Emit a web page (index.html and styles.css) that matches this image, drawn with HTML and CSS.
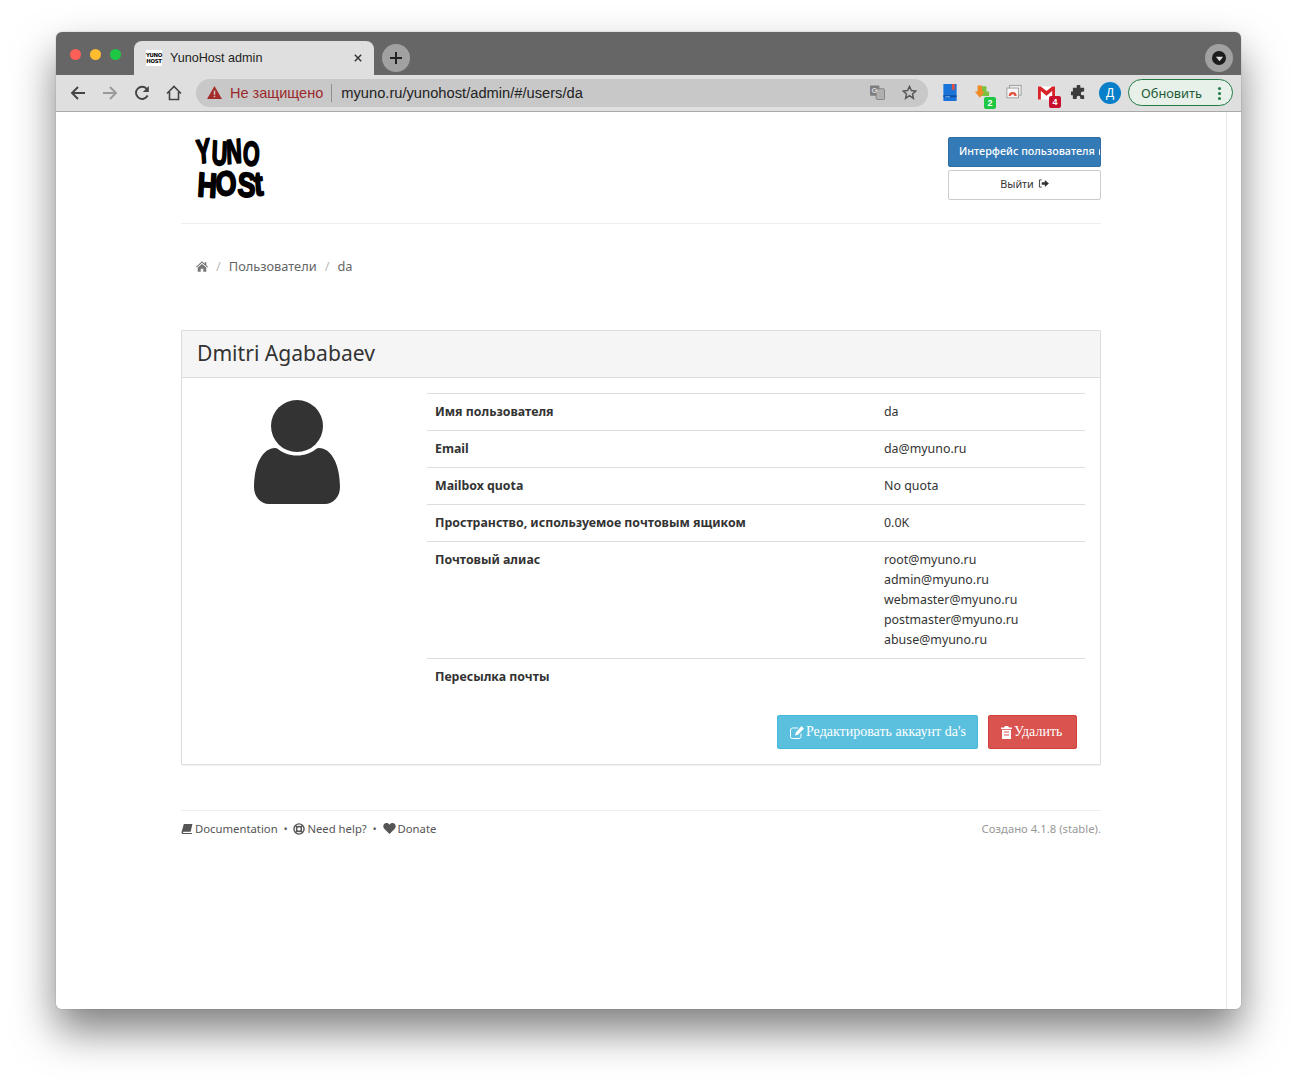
FILE: index.html
```html
<!DOCTYPE html>
<html lang="ru">
<head>
<meta charset="utf-8">
<title>YunoHost admin</title>
<link rel="stylesheet" href="styles.css">
</head>
<body>
<div class="window">
  <div class="titlebar">
    <div class="lights"><i class="light red"></i><i class="light yellow"></i><i class="light green"></i></div>
    <div class="tab">
      <span class="favicon"><span>Yuno</span><span>Host</span></span>
      <span class="tab-title">YunoHost admin</span>
      <svg class="tab-close" viewBox="0 0 10 10"><path d="M1 1l8 8M9 1l-8 8"/></svg>
    </div>
    <div class="newtab"><svg viewBox="0 0 12 12"><path d="M6 0v12M0 6h12"/></svg></div>
    <div class="spacer"></div>
    <div class="profile-menu"><span class="dark-disc"><svg viewBox="0 0 10 10"><path d="M1 3h8L5 8z"/></svg></span></div>
  </div>
  <div class="toolbar">
    <svg class="nav" viewBox="0 0 16 16"><path class="st" d="M15 8H2M8 2L2 8l6 6"/></svg>
    <svg class="nav fwd" viewBox="0 0 16 16"><path class="st" d="M1 8h13M8 2l6 6-6 6"/></svg>
    <svg class="nav" viewBox="0 0 16 16"><path class="st" d="M13.6 10.500A6.100 6.100 0 1 1 13 4.200"/><path class="fl" d="M14.800 1v6h-6z"/></svg>
    <svg class="nav" viewBox="0 0 16 16"><path class="st thin" d="M1 8.500L8 1.500l7 7M3.500 7v7.500h9V7"/></svg>
    <div class="omnibox">
      <svg class="warn" viewBox="0 0 16 14"><path d="M8 0l8 14H0z"/><rect class="wm" x="7.200" y="5" width="1.600" height="4.500"/><rect class="wm" x="7.200" y="10.500" width="1.600" height="1.600"/></svg>
      <span class="insecure">Не защищено</span>
      <span class="omni-sep"></span>
      <span class="url">myuno.ru/yunohost/admin/#/users/da</span>
      <span class="spacer"></span>
      <svg class="translate" viewBox="0 0 16 16"><rect class="tr1" x="0" y="0.500" width="10" height="11" rx="1"/><rect class="tr2" x="6.500" y="4" width="9" height="11.500" rx="1"/><text class="trg" x="1.500" y="9">G</text></svg>
      <svg class="star" viewBox="0 0 16 16"><path d="M8 1.500l2 4.400 4.800.5-3.600 3.200 1 4.700L8 11.400l-4.200 2.900 1-4.700L1.200 6.400 6 5.900z"/></svg>
    </div>
    <div class="extensions">
      <svg class="ext" viewBox="0 0 16 18"><path fill="#1a73d9" d="M1 0h14v18H1z"/><path fill="#0d4fa3" d="M1 12h14v2H1z"/><path fill="#e2503f" d="M10 0h3v7l-1.500-1.500L10 7z"/><path fill="#7cb8f0" d="M3 13h5v1H3z"/></svg>
      <span class="ext-wrap">
        <svg class="ext" viewBox="0 0 18 18"><path fill="#7cc242" d="M8 2h6v6h3v5H8z"/><path fill="#f08a24" d="M4 1h5v7h3l-5.500 7L1 8h3z"/></svg>
        <b class="badge green-badge">2</b>
      </span>
      <svg class="ext" viewBox="0 0 18 18"><rect x="4" y="1" width="13" height="11" fill="#ececec" stroke="#999"/><rect x="1" y="4" width="13" height="11" fill="#f6f6f6" stroke="#999"/><path fill="#e2503f" d="M3 13a4.500 4.500 0 0 1 9 0H9.500a2 2 0 0 0-4 0z"/></svg>
      <span class="ext-wrap">
        <svg class="ext gmail" viewBox="0 0 18 14"><path fill="#fff" d="M0 0h18v14H0z"/><path fill="#d8232a" d="M0 0h3l6 5 6-5h3v14h-3V5l-6 5-6-5v9H0z"/></svg>
        <b class="badge red-badge">4</b>
      </span>
      <svg class="ext puzzle" viewBox="0 0 16 16"><path d="M6 1.500a2 2 0 0 1 4 0V3h4v4h-1.500a2 2 0 0 0 0 4H14v4h-4v-1.500a2 2 0 0 0-4 0V15H2v-4H.5a2 2 0 0 1 0-4H2V3h4z"/></svg>
      <span class="avatar-chip">Д</span>
    </div>
    <div class="update">
      <span>Обновить</span>
      <span class="dots"><i></i><i></i><i></i></span>
    </div>
  </div>
  <div class="viewport">
    <div class="page">
      <div class="container">
        <header class="site-header">
          <svg class="logo" viewBox="0 0 72 62">
            <text x="2" y="27" rotate="-6 4 -4 6" textLength="62" lengthAdjust="spacingAndGlyphs">YUNO</text>
            <text x="2" y="59" rotate="4 -4 3 -6" textLength="67" lengthAdjust="spacingAndGlyphs">HOSt</text>
          </svg>
          <div class="header-actions">
            <a class="hbtn primary"><span>Интерфейс пользователя</span><span class="clip-icon"></span></a>
            <a class="hbtn plain"><span>Выйти</span>
              <svg class="ico-logout" viewBox="0 0 12 10"><path class="st1" d="M4 1H1.500v8H4"/><path d="M4 3.500h3.500V1L12 5 7.500 9V6.500H4z"/></svg>
            </a>
          </div>
        </header>
        <nav class="crumbs">
          <svg class="ico-home" viewBox="0 0 14 12"><path d="M7 0l3 2.700V1h2v3.500L14 6.300l-.8.800L7 1.700.8 7.100 0 6.300z"/><path d="M7 3l5 4.300V12H8.500V8.500h-3V12H2V7.300z"/></svg>
          <span class="slash">/</span>
          <span>Пользователи</span>
          <span class="slash">/</span>
          <span>da</span>
        </nav>
        <section class="panel">
          <h2 class="panel-heading">Dmitri Agababaev</h2>
          <div class="panel-body">
            <div class="avatar-col">
              <svg class="avatar" viewBox="0 0 86 104"><circle cx="43" cy="26" r="26"/><path d="M21 48c1 0 2 .4 3 1 5 4 11 6.500 19 6.500S57 53 62 49c1-.6 2-1 3-1 12 0 21 16 21 39 0 10-7 17-15 17H15C7 104 0 97 0 87c0-23 9-39 21-39z"/></svg>
            </div>
            <div class="info-col">
              <table class="info">
                <tr><th>Имя пользователя</th><td>da</td></tr>
                <tr><th>Email</th><td>da@myuno.ru</td></tr>
                <tr><th>Mailbox quota</th><td>No quota</td></tr>
                <tr><th>Пространство, используемое почтовым ящиком</th><td>0.0K</td></tr>
                <tr><th>Почтовый алиас</th><td>root@myuno.ru<br>admin@myuno.ru<br>webmaster@myuno.ru<br>postmaster@myuno.ru<br>abuse@myuno.ru</td></tr>
                <tr><th>Пересылка почты</th><td></td></tr>
              </table>
              <div class="panel-actions">
                <a class="btn info-btn">
                  <svg class="ico-edit" viewBox="0 0 14 13"><path class="st1" d="M11 7.500V10.500a2 2 0 0 1-2 2H2.500a2 2 0 0 1-2-2V4a2 2 0 0 1 2-2H8"/><path class="fillw" d="M11.500 0L14 2.500 8 8.700 5 9.500l.8-3z"/></svg>
                  <span>Редактировать аккаунт da's</span>
                </a>
                <a class="btn danger-btn">
                  <svg class="ico-trash" viewBox="0 0 11 13"><path class="fillw" d="M4 0h3l1 1.500h3V3H0V1.500h3zM1 3.800h9V13H1z"/><path class="trash-lines" d="M3 6h5M3 9h5"/></svg>
                  <span>Удалить</span>
                </a>
              </div>
            </div>
          </div>
        </section>
        <footer class="site-footer">
          <div class="links">
            <a><svg class="ico-f" viewBox="0 0 12 11"><path d="M2.500 0H12L10 8.500H2a1 1 0 0 0 0 1.500h9.500l-.3 1H1.500C.4 11-.2 10 .1 8.500z"/></svg>Documentation</a>
            <span class="dot">•</span>
            <a><svg class="ico-life" viewBox="0 0 13 13"><circle cx="6.500" cy="6.500" r="5.500"/><circle cx="6.500" cy="6.500" r="2.700"/><path d="M2.500 2.500l2 2M8.500 8.500l2 2M10.500 2.500l-2 2M4.500 8.500l-2 2"/></svg>Need help?</a>
            <span class="dot">•</span>
            <a><svg class="ico-heart" viewBox="0 0 13 11"><path d="M6.500 11L1 5.500C-.5 3.500.5 0 3.500 0c1.300 0 2.300.7 3 1.700C7.200.7 8.200 0 9.500 0c3 0 4 3.500 2.500 5.500z"/></svg>Donate</a>
          </div>
          <div class="built">Создано 4.1.8 (stable).</div>
        </footer>
      </div>
    </div>
    <div class="scrollbar"></div>
  </div>
</div>
</body>
</html>
```
FILE: styles.css
```css
* { box-sizing: border-box; }
html, body { margin: 0; height: 100%; background: #fff; overflow: hidden; }
body { padding: 32px 56px 80px; font-family: "Noto Sans", sans-serif; color: #333; }
.window {
  width: 1185px; height: 977px; border-radius: 6px; overflow: hidden;
  display: flex; flex-direction: column; background: #fff;
  box-shadow: 0 22px 42px rgba(0,0,0,.5), 0 0 1px rgba(0,0,0,.5);
}
.spacer { flex: 1; }

.titlebar { height: 43px; background: #666; display: flex; align-items: flex-end; flex: none; }
.lights { display: flex; gap: 9px; width: 78px; padding: 0 0 15px 14px; align-self: flex-end; }
.light { width: 11px; height: 11px; border-radius: 50%; display: block; }
.red { background: #ff5f57; } .yellow { background: #febc2e; } .green { background: #1fc844; }
.tab {
  width: 240px; height: 34px; background: #dfdfdf; border-radius: 8px 8px 0 0;
  display: flex; align-items: center; padding: 0 12px; font: 12.600px "Liberation Sans", sans-serif; color: #222;
}
.favicon {
  width: 16px; height: 16px; background: #fff; margin-right: 8px; display: flex; flex-direction: column;
  align-items: center; font: 900 5.400px/6px "DejaVu Sans", sans-serif; color: #000; text-transform: uppercase; padding-top: 2px; letter-spacing: -.3px;
}
.tab-title { flex: 1; }
.tab-close { width: 8px; height: 8px; }
.tab-close path { stroke: #333; stroke-width: 1.800; fill: none; }
.newtab { width: 28px; height: 28px; border-radius: 50%; background: #a1a1a1; margin: 0 0 3px 8px; display: flex; align-items: center; justify-content: center; }
.newtab svg { width: 12px; height: 12px; }
.newtab path { stroke: #222; stroke-width: 2; fill: none; }
.profile-menu { width: 28px; height: 28px; border-radius: 50%; background: #a1a1a1; margin: 0 8px 3px 0; display: flex; align-items: center; justify-content: center; }
.dark-disc { width: 14px; height: 14px; border-radius: 50%; background: #1c1c1c; display: flex; align-items: center; justify-content: center; }
.dark-disc svg { width: 9px; height: 9px; fill: #ddd; }

.toolbar { height: 37px; flex: none; background: #dfdfdf; border-bottom: 1px solid #a9a9a9; display: flex; align-items: center; padding: 0 8px 1px 14px; }
.nav { width: 16px; height: 16px; margin-right: 16px; flex: none; }
.nav .st { stroke: #444; stroke-width: 1.900; fill: none; }
.nav .thin { stroke-width: 1.600; }
.nav.fwd .st { stroke: #9a9a9a; }
.nav .fl { fill: #444; }
.omnibox { width: 732px; height: 28px; margin-left: -2px; background: #c8c8c8; border-radius: 14px; display: flex; align-items: center; padding: 0 11px; font: 14.500px "Liberation Sans", sans-serif; flex: none; }
.warn { width: 15px; height: 13px; fill: #a52a2a; flex: none; }
.wm { fill: #c8c8c8; }
.insecure { color: #9b2b2b; margin-left: 8px; }
.omni-sep { width: 1px; height: 18px; background: #8f8f8f; margin: 0 9px 0 8px; }
.url { color: #222; font-size: 14.700px; }
.translate { width: 15px; height: 15px; margin-right: 17px; }
.tr1 { fill: #7d7d7d; }
.tr2 { fill: #b0b0b0; stroke: #777; stroke-width: .8; }
.trg { font: 700 8px "Liberation Sans", sans-serif; fill: #ddd; }
.star { width: 15px; height: 15px; fill: none; stroke: #555; stroke-width: 1.500; }
.extensions { display: flex; align-items: center; flex: 1; padding-left: 14px; }
.extensions > .ext, .ext-wrap { margin-right: 16px; }
.ext { width: 16px; height: 17px; display: block; flex: none; }
.ext-wrap { position: relative; display: block; flex: none; width: 16px; }
.gmail { width: 17px; height: 14px; }
.badge { position: absolute; right: -6px; bottom: -8px; width: 12px; height: 12px; border-radius: 2px; font: 700 9px/12px "Liberation Sans", sans-serif; color: #fff; text-align: center; }
.green-badge { background: #1fc844; } .red-badge { background: #c8102e; right: -7px; }
.extensions > .puzzle { width: 15px; height: 15px; fill: #3c3c3c; margin: 0 13px 0 1px; }
.avatar-chip { width: 22px; height: 22px; border-radius: 50%; background: #0a7fc9; color: #fff; font: 12px/22px "Liberation Sans", sans-serif; text-align: center; flex: none; }
.update { width: 105px; height: 27px; border: 1px solid #1f7a43; border-radius: 14px; background: #e8f0ea; display: flex; align-items: center; justify-content: space-between; padding: 1px 11px 0 12px; font: 12.800px "Noto Sans", sans-serif; color: #1d5c36; flex: none; }
.dots { display: flex; flex-direction: column; gap: 2px; }
.dots i { width: 3px; height: 3px; border-radius: 50%; background: #1f7a43; display: block; }

.viewport { flex: 1; display: flex; min-height: 0; background: #fff; }
.page { flex: 1; min-width: 0; padding-left: 125px; }
.scrollbar { width: 15px; border-left: 1px solid #e6e6e6; background: #fff; flex: none; }
.container { width: 920px; }

.site-header { height: 112px; border-bottom: 1px solid #eee; padding: 25px 0 0 14px; display: flex; justify-content: space-between; align-items: flex-start; }
.logo { width: 72px; height: 62px; overflow: visible; }
.logo text {
  font: 900 34px "Liberation Sans", sans-serif; fill: #000; stroke: #000; stroke-width: 2;
  stroke-linejoin: round; paint-order: stroke;
}
.header-actions { width: 153px; display: flex; flex-direction: column; gap: 3px; }
.hbtn { height: 30px; display: flex; align-items: center; justify-content: center; gap: 4px; font-size: 10.800px; border-radius: 2px; overflow: hidden; white-space: nowrap; padding-bottom: 4px; }
.primary { background: #337ab7; color: #fff; border: 1px solid #2e6da4; justify-content: flex-start; padding-left: 10px; font-weight: 500; }
.clip-icon { width: 8px; height: 7px; margin-top: 2px; background: #fff; border-radius: 3px 3px 0 0; flex: none; }
.plain { background: #fff; border: 1px solid #ccc; color: #333; }
.ico-logout { width: 11px; height: 9px; fill: #333; }
.st1 { fill: none; stroke: #333; stroke-width: 1; }

.crumbs { height: 106px; padding: 34px 0 0 15px; display: flex; align-items: flex-start; gap: 7px; font-size: 12.800px; line-height: 17px; color: #666; }
.crumbs .slash { color: #bbb; margin: 0 1px; }
.ico-home { width: 12px; height: 11px; fill: #777; margin-top: 3px; }

.panel { height: 435px; border: 1px solid #ddd; border-radius: 1px; box-shadow: 0 1px 1px rgba(0,0,0,.05); }
.panel-heading { margin: 0; height: 47px; padding: 0 15px; background: #f5f5f5; border-bottom: 1px solid #ddd; font-size: 21.100px; font-weight: 400; line-height: 43px; color: #333; }
.panel-body { display: grid; grid-template-columns: 230px 1fr; column-gap: 15px; padding: 15px 15px 15px 0; }
.avatar-col { display: flex; justify-content: center; padding-top: 7px; }
.avatar { width: 86px; height: 104px; fill: #333; }
.info { width: 100%; border-collapse: collapse; line-height: 20px; }
.info th, .info td { border-top: 1px solid #ddd; padding: 8px; text-align: left; vertical-align: top; }
.info td { font-size: 12.400px; }
.info th { width: 449px; font-weight: 700; font-size: 12.350px; }
.panel-actions { display: flex; justify-content: flex-end; gap: 10px; padding: 20px 8px 0 0; }
.btn { height: 34px; display: flex; align-items: center; gap: 2px; font: 14px "Liberation Serif", serif; color: #fff; border-radius: 2px; white-space: nowrap; }
.info-btn { width: 201px; background: #5bc0de; border: 1px solid #46b8da; padding-left: 12px; }
.danger-btn { width: 89px; background: #d9534f; border: 1px solid #d43f3a; padding-left: 12px; }
.ico-edit { width: 14px; height: 13px; }
.ico-edit .st1 { stroke: #fff; }
.fillw { fill: #fff; }
.ico-trash { width: 11px; height: 13px; }
.trash-lines { stroke: #d9534f; stroke-width: 1; fill: none; }

.site-footer { margin-top: 45px; height: 36px; border-top: 1px solid #eee; display: flex; justify-content: space-between; align-items: center; font-size: 11.300px; color: #555; }
.links { display: flex; align-items: center; gap: 5px; }
.links a { display: flex; align-items: center; gap: 2px; }
.ico-f { width: 12px; height: 10px; fill: #555; }
.ico-life { width: 12px; height: 12px; fill: none; stroke: #555; stroke-width: 1.500; }
.ico-heart { width: 13px; height: 11px; fill: #555; }
.dot { font-size: 10px; margin: 0 1px; }
.built { color: #999; }
```
